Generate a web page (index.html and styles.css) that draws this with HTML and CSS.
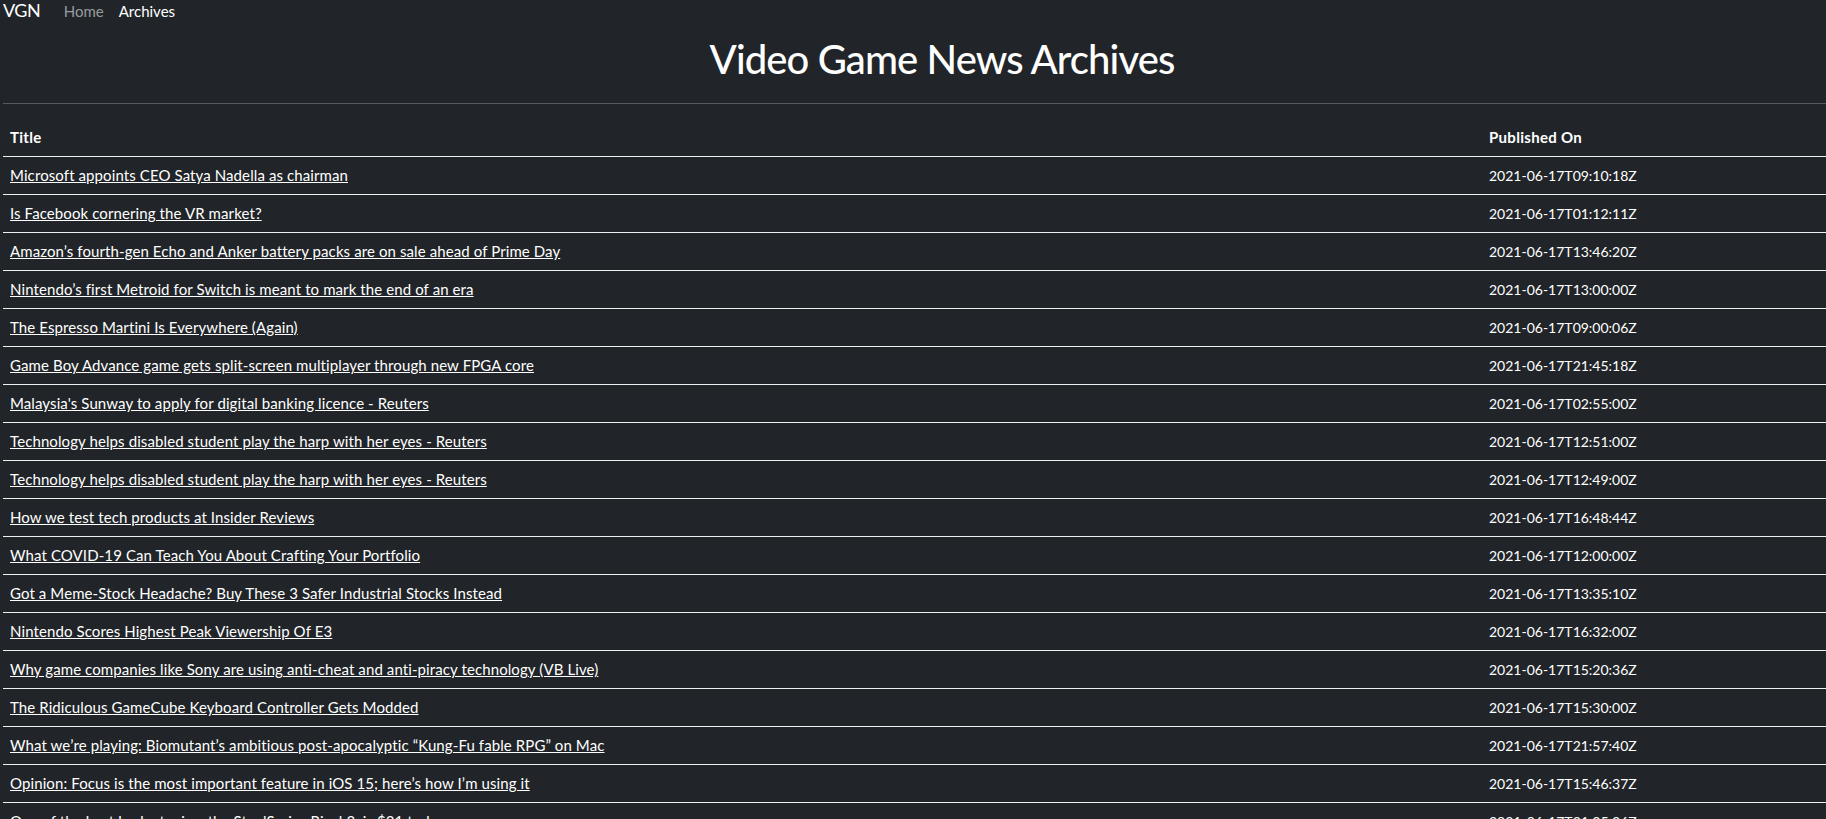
FILE: index.html
```html
<!DOCTYPE html>
<html lang="en">
<head>
<meta charset="utf-8">
<title>Video Game News Archives</title>
<link rel="stylesheet" href="styles.css">
</head>
<body>
<nav class="navbar">
  <a class="brand" href="#">VGN</a>
  <a class="nav-link" href="#">Home</a>
  <a class="nav-link active" href="#">Archives</a>
</nav>
<main class="page">
  <header class="page-head">
    <h1 class="page-title">Video Game News Archives</h1>
  </header>
  <hr class="divider">
  <table class="news">
    <colgroup><col class="col-title"><col class="col-date"></colgroup>
    <thead>
      <tr><th>Title</th><th>Published On</th></tr>
    </thead>
    <tbody>
      <tr><td><a href="#">Microsoft appoints CEO Satya Nadella as chairman</a></td><td>2021-06-17T09:10:18Z</td></tr>
      <tr><td><a href="#">Is Facebook cornering the VR market?</a></td><td>2021-06-17T01:12:11Z</td></tr>
      <tr><td><a href="#">Amazon’s fourth-gen Echo and Anker battery packs are on sale ahead of Prime Day</a></td><td>2021-06-17T13:46:20Z</td></tr>
      <tr><td><a href="#">Nintendo’s first Metroid for Switch is meant to mark the end of an era</a></td><td>2021-06-17T13:00:00Z</td></tr>
      <tr><td><a href="#">The Espresso Martini Is Everywhere (Again)</a></td><td>2021-06-17T09:00:06Z</td></tr>
      <tr><td><a href="#">Game Boy Advance game gets split-screen multiplayer through new FPGA core</a></td><td>2021-06-17T21:45:18Z</td></tr>
      <tr><td><a href="#">Malaysia's Sunway to apply for digital banking licence - Reuters</a></td><td>2021-06-17T02:55:00Z</td></tr>
      <tr><td><a href="#">Technology helps disabled student play the harp with her eyes - Reuters</a></td><td>2021-06-17T12:51:00Z</td></tr>
      <tr><td><a href="#">Technology helps disabled student play the harp with her eyes - Reuters</a></td><td>2021-06-17T12:49:00Z</td></tr>
      <tr><td><a href="#">How we test tech products at Insider Reviews</a></td><td>2021-06-17T16:48:44Z</td></tr>
      <tr><td><a href="#">What COVID-19 Can Teach You About Crafting Your Portfolio</a></td><td>2021-06-17T12:00:00Z</td></tr>
      <tr><td><a href="#">Got a Meme-Stock Headache? Buy These 3 Safer Industrial Stocks Instead</a></td><td>2021-06-17T13:35:10Z</td></tr>
      <tr><td><a href="#">Nintendo Scores Highest Peak Viewership Of E3</a></td><td>2021-06-17T16:32:00Z</td></tr>
      <tr><td><a href="#">Why game companies like Sony are using anti-cheat and anti-piracy technology (VB Live)</a></td><td>2021-06-17T15:20:36Z</td></tr>
      <tr><td><a href="#">The Ridiculous GameCube Keyboard Controller Gets Modded</a></td><td>2021-06-17T15:30:00Z</td></tr>
      <tr><td><a href="#">What we’re playing: Biomutant’s ambitious post-apocalyptic “Kung-Fu fable RPG” on Mac</a></td><td>2021-06-17T21:57:40Z</td></tr>
      <tr><td><a href="#">Opinion: Focus is the most important feature in iOS 15; here’s how I’m using it</a></td><td>2021-06-17T15:46:37Z</td></tr>
      <tr><td><a href="#">One of the best budget mice, the SteelSeries Rival 3, is $31 today</a></td><td>2021-06-17T21:35:36Z</td></tr>
    </tbody>
  </table>
</main>
</body>
</html>
```
FILE: styles.css
```css
html, body {
  margin: 0;
  padding: 0;
  background: #212529;
  color: #fff;
  font-family: Lato, "Open Sans", sans-serif;
}

body {
  overflow: hidden;
}

.navbar {
  display: flex;
  align-items: baseline;
  padding-left: 3px;
  height: 20px;
}

.brand {
  font-size: 18px;
  line-height: 20px;
  letter-spacing: -0.5px;
  color: #fff;
  text-decoration: none;
  margin-right: 16px;
}

.nav-link {
  font-size: 15px;
  line-height: 20px;
  color: rgba(255, 255, 255, 0.55);
  text-decoration: none;
  padding: 0 7.5px;
}

.nav-link.active {
  color: #fff;
}

.page {
  padding-left: 3px;
}

.page-head {
  padding-left: 55px;
  text-align: center;
}

.page-title {
  margin: 15px 0 0;
  font-size: 40px;
  line-height: 48px;
  font-weight: 500;
  letter-spacing: -0.9px;
}

.divider {
  margin: 20px 0 15px;
  border: 0;
  border-top: 1px solid rgba(255, 255, 255, 0.25);
  height: 0;
}

.news {
  width: 100%;
  border-collapse: collapse;
  table-layout: fixed;
}

.col-date {
  width: 345px;
}

.news th,
.news td {
  text-align: left;
  padding: 8px 8px 8px 7px;
  border-bottom: 1px solid #f0f0f0;
  white-space: nowrap;
  overflow: hidden;
}

.news th {
  font-size: 15px;
  line-height: 21px;
  font-weight: 700;
  letter-spacing: 0.3px;
  vertical-align: bottom;
}

.news td {
  font-size: 14px;
  line-height: 21px;
}

.news td:last-child,
.news th:last-child {
  padding-left: 8px;
}

.news td a {
  font-size: 15px;
  color: #fff;
  text-decoration: underline;
  letter-spacing: 0.1px;
}
```
